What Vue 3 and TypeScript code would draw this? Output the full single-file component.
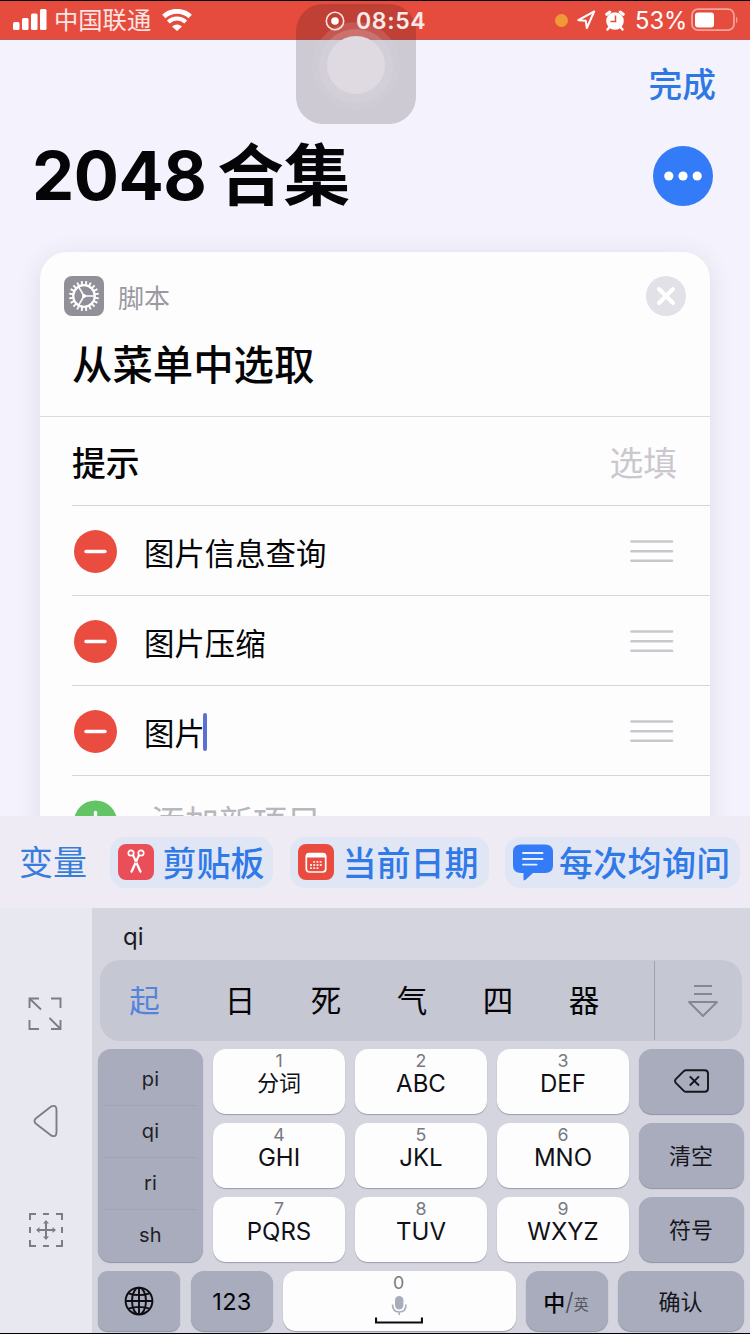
<script setup lang="ts">
interface Key { num: string; label: string }

const items: string[] = ['图片信息查询', '图片压缩', '图片']
const candidates: string[] = ['日', '死', '气', '四', '器']
const syllables: string[] = ['pi', 'qi', 'ri', 'sh']
const keys: Key[] = [
  { num: '1', label: '分词' },
  { num: '2', label: 'ABC' },
  { num: '3', label: 'DEF' },
  { num: '4', label: 'GHI' },
  { num: '5', label: 'JKL' },
  { num: '6', label: 'MNO' },
  { num: '7', label: 'PQRS' },
  { num: '8', label: 'TUV' },
  { num: '9', label: 'WXYZ' },
]
const teeth: number[] = Array.from({ length: 20 }, (_, i) => i * 18)
</script>

<template>
  <div class="screen">
    <header class="status">
      <svg class="signal" width="34" height="22" viewBox="0 0 34 22" fill="#fff">
        <rect x="0" y="13" width="6.5" height="8" rx="1.5" />
        <rect x="9" y="9" width="6.5" height="12" rx="1.5" />
        <rect x="18" y="4.500" width="6.500" height="16.500" rx="1.500" />
        <rect x="27" y="0" width="6.500" height="21" rx="1.500" />
      </svg>
      <span class="carrier">中国联通</span>
      <svg class="wifi" width="30" height="22" viewBox="0 0 30 22" fill="none" stroke="#fff">
        <path d="M1.800 7.600 A19 19 0 0 1 28.200 7.600" stroke-width="4.800" />
        <path d="M6.300 13 A12.500 12.500 0 0 1 23.700 13" stroke-width="4" />
        <path d="M10 17.500 Q15 13.500 20 17.500 L15 22 Z" fill="#fff" stroke="none" />
      </svg>
      <div class="clock">
        <svg width="20" height="20" viewBox="0 0 20 20" fill="none" stroke="#fbe3e2">
          <circle cx="10" cy="10" r="8.700" stroke-width="1.600" />
          <circle cx="10" cy="10" r="3.800" fill="#fff" stroke="none" />
        </svg>
        <span>08:54</span>
      </div>
      <div class="status-right">
        <i class="mic-dot"></i>
        <svg class="loc" width="19" height="20" viewBox="0 0 19 20" fill="none" stroke="#fff" stroke-width="2" stroke-linejoin="round">
          <path d="M1.300 10.200 L17.200 1.500 L9.800 18 L8.800 10.800 Z" />
        </svg>
        <svg class="alarm" width="20" height="21" viewBox="0 0 20 21">
          <circle cx="10" cy="11" r="8.800" fill="#fff" />
          <path d="M1.800 4.300 L4.800 2 M18.200 4.300 L15.200 2" stroke="#fff" stroke-width="3" stroke-linecap="round" />
          <path d="M4.500 17 L2.500 19.500 M15.500 17 L17.500 19.500" stroke="#fff" stroke-width="2.400" stroke-linecap="round" />
          <path d="M10.500 5.500 V11.500 H5.500" fill="none" stroke="#e64c3e" stroke-width="1.500" />
        </svg>
        <span class="percent">53%</span>
        <svg width="48" height="24" viewBox="0 0 48 24">
          <rect x="1" y="1.200" width="42" height="21" rx="6" fill="none" stroke="#f2a39b" stroke-width="1.800" />
          <rect x="4" y="4.500" width="19" height="15" rx="3" fill="#fff" />
          <path d="M45 8.500 Q48 12 45 15.500 Z" fill="#f2a39b" />
        </svg>
      </div>
    </header>

    <div class="touch"><i class="r1"></i><i class="r2"></i><i class="r3"></i></div>

    <main class="page">
      <div class="done">完成</div>
      <div class="title-row">
        <h1><span>2048</span><span class="cjk">合集</span></h1>
        <svg width="60" height="60" viewBox="0 0 60 60">
          <circle cx="30" cy="30" r="30" fill="#347bf7" />
          <g fill="#fff"><circle cx="15.800" cy="30" r="4.600" /><circle cx="30" cy="30" r="4.600" /><circle cx="44.200" cy="30" r="4.600" /></g>
        </svg>
      </div>

      <section class="card">
        <div class="card-head">
          <div class="kind">
            <svg width="40" height="40" viewBox="0 0 40 40">
              <rect width="40" height="40" rx="8" fill="#918f98" />
              <g stroke="#fff" fill="none">
                <circle cx="20" cy="20" r="10.800" stroke-width="2.200" />
                <path v-for="a in teeth" :key="a" d="M20 5 V9.500" stroke-width="1.900" :transform="`rotate(${a + 9} 20 20)`" />
                <path d="M20 20 H31 M20 20 L14.500 10.500 M20 20 L14.500 29.500" stroke-width="1.500" />
              </g>
              <circle cx="20" cy="20" r="2" fill="#fff" />
            </svg>
            <span>脚本</span>
            <svg class="close" width="40" height="40" viewBox="0 0 40 40">
              <circle cx="20" cy="20" r="20" fill="#e3e1e8" />
              <path d="M13 13 L27 27 M27 13 L13 27" stroke="#fff" stroke-width="4" stroke-linecap="round" />
            </svg>
          </div>
          <h2>从菜单中选取</h2>
        </div>
        <div class="prompt"><b>提示</b><span>选填</span></div>
        <div v-for="(item, i) in items" :key="item" class="item">
          <svg width="44" height="44" viewBox="0 0 44 44">
            <circle cx="22.500" cy="22.500" r="21.500" fill="#ea4d40" />
            <path d="M13 22.500 H32" stroke="#fff" stroke-width="3.400" stroke-linecap="round" />
          </svg>
          <span class="name">{{ item }}</span><i v-if="i === 2" class="caret"></i>
          <svg class="grip" width="44" height="24" viewBox="0 0 44 24" stroke="#c9c7cd" stroke-width="2.600" stroke-linecap="round">
            <path d="M1.500 2.500 H42 M1.500 12.200 H42 M1.500 21.700 H42" />
          </svg>
        </div>
        <div class="item add">
          <svg width="44" height="44" viewBox="0 0 44 44">
            <circle cx="22.500" cy="22" r="21.600" fill="#63c466" />
            <path d="M22.500 12.500 V31.500 M13 22 H32" stroke="#fff" stroke-width="3.400" stroke-linecap="round" />
          </svg>
          <span class="name">添加新项目</span>
        </div>
      </section>
    </main>

    <div class="vars">
      <span class="var">变量</span>
      <div class="chip clip">
        <svg width="36" height="36" viewBox="0 0 36 36">
          <rect width="36" height="36" rx="8" fill="#e94e59" />
          <g stroke="#fff" fill="none" stroke-width="1.700"><circle cx="13" cy="9" r="2.700" /><circle cx="23" cy="9" r="2.700" /></g>
          <path d="M14 11.500 L16 10.800 L23.700 27.500 Q22.500 30.500 20.800 27 Z" fill="#fff" />
          <path d="M22 11.500 L20 10.800 L12.300 27.500 Q13.500 30.500 15.200 27 Z" fill="#fff" />
          <circle cx="18" cy="18.500" r=".8" fill="#e94e59" />
        </svg>
        <span>剪贴板</span>
      </div>
      <div class="chip date">
        <svg width="36" height="36" viewBox="0 0 36 36">
          <rect width="36" height="36" rx="8" fill="#e94c3e" />
          <rect x="8.300" y="9.500" width="19.400" height="18.500" rx="3" fill="none" stroke="#fff" stroke-width="1.700" />
          <path d="M8 13.500 V12 Q8 9 11 9 H25 Q28 9 28 12 V13.500 Z" fill="#fff" />
          <path d="M15.200 17.800 H25 M12 21 H25 M12 24.200 H21.700" stroke="#fff" stroke-opacity=".85" stroke-width="1.800" stroke-dasharray="1.900 1.350" />
        </svg>
        <span>当前日期</span>
      </div>
      <div class="chip ask">
        <svg width="40" height="37" viewBox="0 0 40 37">
          <path d="M8 .5 H32 Q40 .5 40 8 V21.500 Q40 29 32 29 H20 L12.300 36 Q10.500 37.300 10.500 35 V29 H8 Q0 29 0 21.500 V8 Q0 .5 8 .5 Z" fill="#347bf7" />
          <path d="M10 9 H29.500 M10 15 H29.500 M10 20.600 H23.500" stroke="#e8f2ff" stroke-width="1.900" stroke-linecap="round" />
        </svg>
        <span>每次均询问</span>
      </div>
    </div>

    <div class="keyboard">
      <aside>
        <svg width="34" height="34" viewBox="0 0 34 34" fill="none" stroke="#7b7d89" stroke-width="1.900">
          <path d="M11 1.500 H1.500 V11 M1.500 1.500 L13 12.500 M23 1.500 H32.500 V11 M1.500 23 V32 H11 M32.500 23 V32 H23 M21.500 21 L32.500 32" />
        </svg>
        <svg width="26" height="34" viewBox="0 0 26 34" fill="none" stroke="#7b7d89" stroke-width="1.900" stroke-linejoin="round">
          <path d="M18.500 2.300 L3 14.200 Q0 17 3 19.800 L18.500 31.700 Q23.500 33.500 23.500 28 V6 Q23.500 .5 18.500 2.300 Z" />
        </svg>
        <svg width="36" height="36" viewBox="0 0 36 36" fill="none" stroke="#7b7d89" stroke-width="2">
          <path d="M8 2 H2 V8 M28 2 H34 V8 M2 28 V34 H8 M34 28 V34 H28 M15 2 H21 M15 34 H21 M2 15 V21 M34 15 V21 M18 9.500 V26.500 M9.500 18 H26.500" />
          <path d="M18 8 L15 11.500 H21 Z M18 28 L15 24.500 H21 Z M8 18 L11.500 15 V21 Z M28 18 L24.500 15 V21 Z" fill="#7b7d89" stroke="none" />
        </svg>
      </aside>
      <div class="panel">
        <div class="typed">qi</div>
        <div class="cands">
          <span class="first">起</span>
          <span v-for="c in candidates" :key="c">{{ c }}</span>
          <div class="more">
            <svg width="32" height="34" viewBox="0 0 32 34" fill="none" stroke="#858794" stroke-width="1.800" stroke-linejoin="round">
              <path d="M7 2 H25 M7 10 H25 M2 18 H30 L16 32 Z" />
            </svg>
          </div>
        </div>
        <div class="keys">
          <div class="syll key dark">
            <span v-for="s in syllables" :key="s">{{ s }}</span>
          </div>
          <div class="grid">
            <div v-for="k in keys" :key="k.num" class="key">
              <small>{{ k.num }}</small><span :class="{ hanzi: k.num === '1' }">{{ k.label }}</span>
            </div>
          </div>
          <div class="side">
            <div class="key dark">
              <svg width="36" height="24" viewBox="0 0 36 24" fill="none" stroke="#15151b" stroke-width="1.900" stroke-linejoin="round">
                <path d="M12 1.200 H30.500 Q34 1.200 34 4.500 V19.500 Q34 22.800 30.500 22.800 H12 Q10.800 22.800 9.800 21.800 L1.800 13.800 Q.3 12 1.800 10.200 L9.800 2.200 Q10.800 1.200 12 1.200 Z" />
                <path d="M15.800 7.300 L25 16.500 M25 7.300 L15.800 16.500" />
              </svg>
            </div>
            <div class="key dark fn">清空</div>
            <div class="key dark fn">符号</div>
          </div>
        </div>
        <div class="bottom">
          <div class="key dark globe">
            <svg width="30" height="30" viewBox="0 0 30 30" fill="none" stroke="#0d0d12" stroke-width="1.900">
              <circle cx="15" cy="15" r="13.400" />
              <ellipse cx="15" cy="15" rx="7" ry="13.400" />
              <path d="M15 1.600 V28.400 M1.600 15 H28.400 M4.500 7.300 Q15 11 25.500 7.300 M4.500 22.700 Q15 19 25.500 22.700" />
            </svg>
          </div>
          <div class="key dark n123">123</div>
          <div class="key space">
            <small>0</small>
            <svg width="48" height="28" viewBox="0 0 48 28" fill="none">
              <rect x="20" y="0" width="8.400" height="13.500" rx="4.200" fill="#a9acbb" />
              <path d="M17.500 8.500 Q17.500 16 24.200 16 Q31 16 31 8.500 M24.200 16 V19" stroke="#a9acbb" stroke-width="1.600" />
              <path d="M1 21.500 V26.500 H47 V21.500" stroke="#0d0d12" stroke-width="2.200" />
            </svg>
          </div>
          <div class="key dark lang"><b>中</b><i>/</i><small>英</small></div>
          <div class="key dark fn">确认</div>
        </div>
      </div>
    </div>
  </div>
</template>

<style>
html, body { background: #000; overflow: hidden; }
</style>

<style scoped>
* { box-sizing: border-box; }
.screen {
  position: relative; width: 750px; height: 1334px; overflow: hidden;
  display: flex; flex-direction: column; background: #f4f2fc;
  border-top: 1px solid #000; border-bottom: 1px solid #000;
  font-family: Inter, "Noto Sans CJK SC", sans-serif; color: #050508;
}
svg { display: block; flex: none; }
i { font-style: normal; }
.status {
  flex: none; height: 39px; background: #e64c3e; border-bottom: 1px solid #bd5a58;
  display: flex; align-items: center; padding: 0 11px 0 13px; position: relative;
}
.signal { margin-top: -1px; }
.carrier { margin-left: 7px; font-size: 24.300px; font-weight: 400; color: #fbe6e4; line-height: 38px; width: 99px; white-space: nowrap; }
.wifi { margin-left: 9px; }
.clock {
  position: absolute; z-index: 3; left: 325px; top: 1px; height: 38px; display: flex; align-items: center; gap: 11px;
  color: #fbe9e9; font-size: 23px; font-weight: 600; letter-spacing: .65px; white-space: nowrap;
}
.status-right { margin-left: auto; display: flex; align-items: center; color: #fff; }
.mic-dot { width: 13px; height: 13px; border-radius: 50%; background: #f09a37; }
.loc { margin-left: 9px; }
.alarm { margin-left: 9px; }
.percent { margin-left: 10px; width: 56px; font-size: 23.700px; font-weight: 400; white-space: nowrap; }
.touch {
  position: absolute; z-index: 2; left: 296px; top: 3px; width: 120px; height: 120px; border-radius: 27px;
  background: rgba(10, 5, 10, .17);
}
.touch i { position: absolute; border-radius: 50%; }
.r1 { left: 16px; top: 18px; width: 88px; height: 88px; background: rgba(225, 220, 230, .16); }
.r2 { left: 23px; top: 25px; width: 74px; height: 74px; background: rgba(225, 220, 230, .2); }
.r3 { left: 31px; top: 32px; width: 58px; height: 58px; background: #dfdae1; }
.page { flex: none; height: 776px; overflow: hidden; }
.done { height: 96px; padding: 0 34px; text-align: right; line-height: 89px; font-size: 33.700px; font-weight: 500; color: #2e78e4; }
.title-row { height: 80px; display: flex; align-items: center; justify-content: space-between; padding: 0 37px 0 32px; }
h1 { margin: 0; font-size: 67px; line-height: 80px; font-weight: 700; display: flex; letter-spacing: -.5px; }
h1 .cjk { font-size: 66.500px; margin-left: 11px; letter-spacing: 0; }
.card {
  margin: 36px 40px 0; height: 640px; border-radius: 27px 27px 0 0; background: #fdfdfd;
  box-shadow: 0 4px 24px rgba(60, 50, 90, .11);
}
.card-head { height: 165px; padding: 24px 24px 0; border-bottom: 1px solid #dddbe0; }
.kind { display: flex; align-items: center; height: 40px; }
.kind span { margin-left: 14px; font-size: 26px; font-weight: 400; color: #9b99a0; }
.close { margin-left: auto; }
h2 { margin: 20px 0 0 8px; font-size: 40.400px; font-weight: 500; line-height: 60px; }
.prompt { height: 89px; margin-left: 32px; padding: 0 33px 0 0; border-bottom: 1px solid #d6d5d9; display: flex; justify-content: space-between; align-items: center; font-size: 33.800px; }
.prompt b { font-weight: 500; }
.prompt span { font-weight: 400; color: #cac8ce; }
.item { height: 90px; margin-left: 32px; padding: 1px 36px 0 1px; border-bottom: 1px solid #d6d5d9; display: flex; align-items: center; }
.name { margin-left: 27px; padding-top: 1px; font-size: 30.400px; font-weight: 400; white-space: nowrap; }
.caret { width: 4px; height: 38px; border-radius: 2px; background: #5a70d2; margin-left: -2px; margin-top: 1px; }
.grip { margin-left: auto; }
.add { border: 0; }
.add .name { margin-left: 34px; padding: 0 0 3px; font-size: 34px; color: #b9b7bd; }
.vars { flex: none; height: 92px; background: #eeebf5; position: relative; display: flex; align-items: center; padding-left: 20px; color: #3079e9; font-size: 34px; font-weight: 500; white-space: nowrap; }
.var { width: 90px; margin-left: -1px; margin-right: 1px; padding-bottom: 3px; font-weight: 400; color: #377edc; }
.chip { height: 51px; border-radius: 15px; background: #e1e6f4; display: flex; align-items: center; }
.chip span { margin-left: 8.500px; padding-bottom: 1px; }
.clip { width: 163px; padding-left: 8px; }
.date { width: 199px; margin-left: 17px; padding-left: 8px; }
.ask { width: 235px; margin-left: 16px; padding-left: 8px; }
.ask span { margin-left: 6px; letter-spacing: .3px; }
.keyboard { flex: none; height: 425px; display: flex; background: #e8e8f1; }
aside { width: 92px; display: flex; flex-direction: column; align-items: center; padding-top: 89px; }
aside svg:nth-child(1) { margin-left: -2px; }
aside svg:nth-child(2) { margin-top: 73px; }
aside svg:nth-child(3) { margin-top: 74px; }
.panel { width: 658px; background: #d5d5df; padding: 0 6px; }
.typed { height: 52px; padding: 4px 0 0 25px; line-height: 50px; font-size: 24px; color: #1b1b22; }
.cands { height: 81px; margin: 0 2px; border-radius: 20px; background: #c5c7d3; display: flex; align-items: center; padding-left: 2px; }
.cands span { width: 86px; padding-bottom: 4px; text-align: center; font-size: 30.500px; }
.cands .first { color: #5583dc; width: 96px; padding-right: 11px; margin-right: -1px; }
.more { width: 88px; height: 79px; margin-left: auto; border-left: 1px solid #9fa2af; display: flex; align-items: center; justify-content: center; padding-left: 8px; }
.keys { display: flex; gap: 10px; margin-top: 8px; height: 214px; }
.key { border-radius: 13px; background: #fdfdfe; box-shadow: 0 1px 1px #9a9dab; display: flex; flex-direction: column; align-items: center; }
.dark { background: #a9acbc; box-shadow: 0 1px 1px #8d90a0; justify-content: center; }
.syll { width: 105px; height: 213px; justify-content: flex-start; padding-top: 4px; }
.syll span { width: 93px; height: 52px; line-height: 52px; text-align: center; font-size: 20px; color: #1e1f27; letter-spacing: .2px; }
.syll span + span { border-top: 1px solid #a1a4b4; line-height: 51px; }
.grid { display: grid; grid-template-columns: repeat(3, 132px); grid-auto-rows: 65px; gap: 9px 10px; }
.grid small, .space small { font-size: 17.800px; line-height: 20px; color: #777983; margin-top: 2px; }
.grid span { font-size: 24px; line-height: 26px; color: #101016; }
.grid .hanzi { font-size: 22px; line-height: 24px; }
.side { width: 105px; display: grid; grid-auto-rows: 65px; gap: 9px; }
.side svg { margin-top: -1px; }
.fn { font-size: 22px; color: #15151b; padding: 0 1px 3px 0; }
.bottom { display: flex; gap: 10px; margin-top: 8px; height: 60px; }
.bottom .key { height: 60px; }
.bottom .globe { width: 82px; margin-right: 1px; border-radius: 9px; }
.n123 { width: 82px; font-size: 23.500px; letter-spacing: .3px; }
.space { width: 233px; }
.space svg { margin: 3px 2px 0 0; }
.space small { margin: 2px 2px 0 0; }
.lang { width: 82px; flex-direction: row !important; align-items: center; padding-right: 2px; }
.lang b { font-size: 22px; font-weight: 500; }
.lang i { font-size: 24px; font-weight: 300; color: #474955; }
.lang small { font-size: 15px; color: #555763; padding-top: 5px; }
.bottom .fn { width: 126px; }
</style>
